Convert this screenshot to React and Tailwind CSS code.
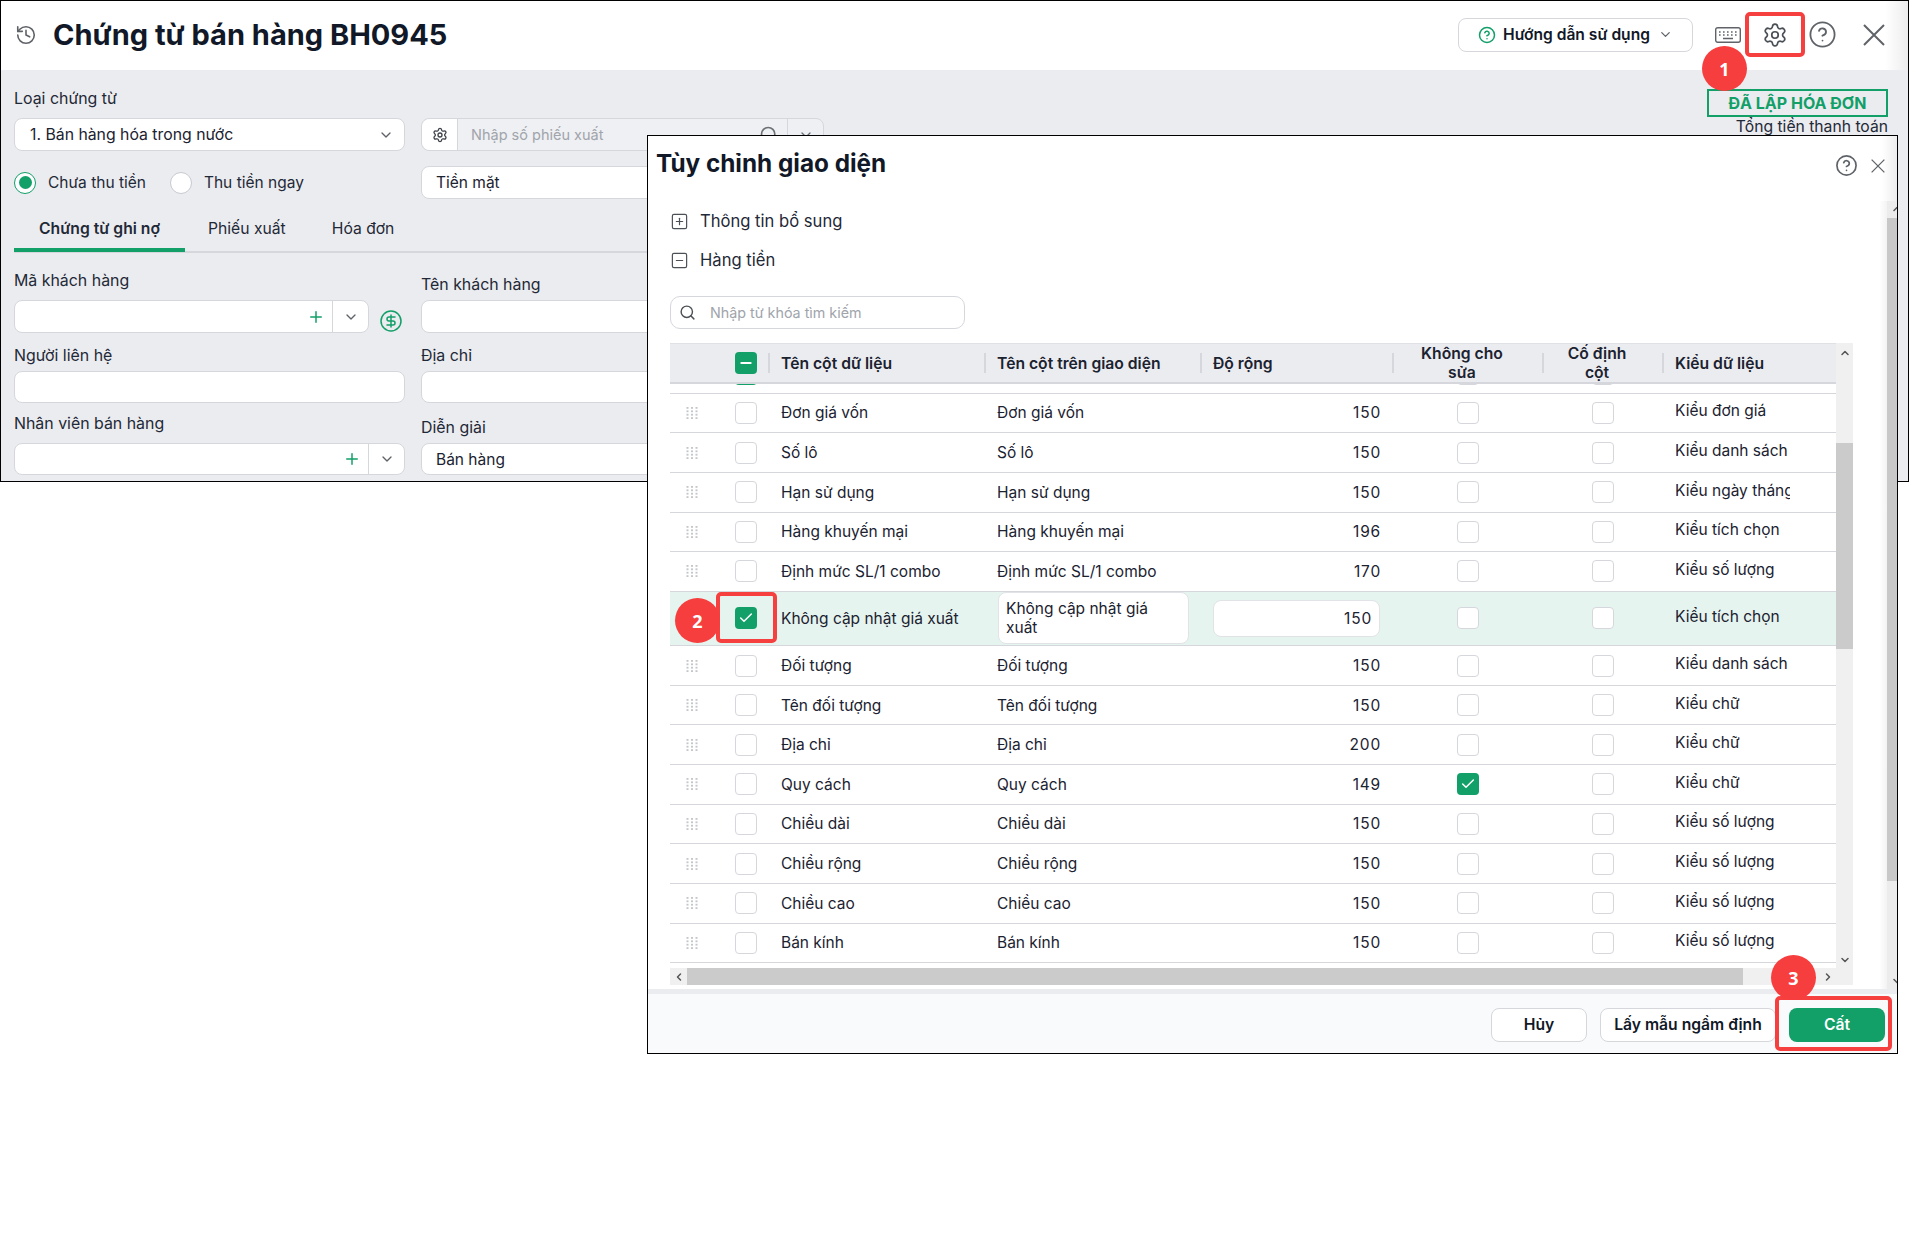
import {
  Check,
  ChevronDown,
  ChevronLeft,
  ChevronRight,
  ChevronUp,
  CircleDollarSign,
  CircleHelp,
  History,
  Minus,
  Plus,
  Search,
  Settings,
  SquareMinus,
  SquarePlus,
} from "lucide-react";

const rowsTop = [
  ["Đơn giá vốn", 150, "Kiểu đơn giá"],
  ["Số lô", 150, "Kiểu danh sách"],
  ["Hạn sử dụng", 150, "Kiểu ngày tháng"],
  ["Hàng khuyến mại", 196, "Kiểu tích chọn"],
  ["Định mức SL/1 combo", 170, "Kiểu số lượng"],
];

const rowsBottom = [
  ["Đối tượng", 150, "Kiểu danh sách"],
  ["Tên đối tượng", 150, "Kiểu chữ"],
  ["Địa chỉ", 200, "Kiểu chữ"],
  ["Quy cách", 149, "Kiểu chữ", true],
  ["Chiều dài", 150, "Kiểu số lượng"],
  ["Chiều rộng", 150, "Kiểu số lượng"],
  ["Chiều cao", 150, "Kiểu số lượng"],
  ["Bán kính", 150, "Kiểu số lượng"],
];

const gridCols =
  "grid grid-cols-[65px_33px_216px_216px_192px_150px_120px_174px] items-center";

const Box = ({ checked }) =>
  checked ? (
    <span className="flex size-[22px] items-center justify-center rounded-[4px] bg-[#129f68] text-white">
      <Check size={16} strokeWidth={2.25} />
    </span>
  ) : (
    <span className="block size-[22px] rounded-[4px] border border-[#d5d7dc] bg-white" />
  );

const DragDots = () => (
  <svg width="12" height="12" viewBox="0 0 12 12" fill="#c4c6ca" className="ml-4">
    {[0, 1, 2, 3].map((r) =>
      [0, 1, 2].map((c) => (
        <rect key={`${r}-${c}`} x={c * 4.5 + 0.5} y={r * 3.4} width="2" height="1.8" />
      )),
    )}
  </svg>
);

const CloseIcon = ({ size }) => (
  <svg width={size} height={size} viewBox="0 0 22 22" fill="none" stroke="currentColor" strokeWidth="2">
    <path d="M1 1L21 21M21 1L1 21" />
  </svg>
);

const Row = ({ name, width, type, locked }) => (
  <div className={`${gridCols} h-[39.65px] border-b border-[#d5d7dc] text-[15.5px] text-[#1b2230]`}>
    <DragDots />
    <Box />
    <div className="pl-[13px]">{name}</div>
    <div className="pl-[13px]">{name}</div>
    <div className="pr-[11px] text-right tracking-[0.8px]">{width}</div>
    <div className="pl-[65px]">
      <Box checked={locked} />
    </div>
    <div className="pl-[50px]">
      <Box />
    </div>
    <div className="-mt-1 w-[128px] overflow-hidden whitespace-nowrap pl-[13px]">{type}</div>
  </div>
);

const HeadCell = ({ children, center, textClass = "" }) => (
  <div className="flex h-full items-center">
    <span className="h-5 w-0.5 shrink-0 bg-[#d5d7dc]" />
    <div className={`${center ? "text-center" : "pl-[11px]"} ${textClass}`}>{children}</div>
  </div>
);

const Field = ({ label, mb, children }) => (
  <div>
    <div className={`h-5 text-[15.9px] leading-5 text-[#1f2937] ${mb}`}>{label}</div>
    {children}
  </div>
);

const Input = ({ h, children, className = "" }) => (
  <div className={`flex items-center rounded-lg border border-[#d5d7dc] bg-white text-[15.5px] text-[#1b2230] ${h} ${className}`}>
    {children}
  </div>
);

const Badge = ({ n, className }) => (
  <div
    className={`absolute flex size-[45px] items-center justify-center rounded-full bg-[#f63e3e] font-['Open_Sans',sans-serif] text-lg font-bold text-white ${className}`}
  >
    {n}
  </div>
);

const RedBox = ({ className }) => (
  <div className={`absolute rounded-[5px] border-4 border-[#f64040] ${className}`} />
);

const KeyboardIcon = () => (
  <svg width="26" height="16" viewBox="0 0 26 16" fill="none" stroke="#5f6368" strokeWidth="1.4">
    <rect x="0.7" y="0.7" width="24.6" height="14.6" rx="2" />
    <path d="M4 5h1.6M8 5h1.6M12 5h1.6M16 5h1.6M20 5h1.6M4 8h1.6M8 8h1.6M12 8h1.6M16 8h1.6M20 8h1.6M8 11.5h10" />
  </svg>
);

const App = () => {
  return (
    <div className="relative h-[1256px] w-full overflow-hidden bg-white font-['Inter',sans-serif] text-[#111827]">
      {/* cua so chung tu */}
      <div className="h-[482px] w-[1909px] overflow-hidden border border-black">
        <div className="flex h-[69px] items-center bg-gradient-to-r from-white from-[98.8%] to-[#ededed] pb-[2px] pl-[14px] pr-[23px]">
          <History size={22} strokeWidth={1.75} className="text-[#5f6368]" />
          <h1 className="ml-[16px] text-[29px] font-bold text-[#111827]">Chứng từ bán hàng BH0945</h1>
          <div className="ml-auto flex h-[34px] w-[235px] items-center justify-center rounded-lg border border-[#d5d7dc] text-[15.6px] font-semibold">
            <CircleHelp size={18} className="mr-[7px] text-[#129f68]" />
            Hướng dẫn sử dụng
            <ChevronDown size={15} className="ml-2 text-[#5f6368]" />
          </div>
          <div className="ml-[22px]">
            <KeyboardIcon />
          </div>
          <Settings size={26} strokeWidth={1.6} className="ml-[21px] text-[#4b5056]" />
          <CircleHelp size={29} strokeWidth={1.5} className="ml-[20px] text-[#5f6368]" />
          <div className="ml-[26px] text-[#5f6368]">
            <CloseIcon size={22} />
          </div>
        </div>

        <div className="flex h-[411px] bg-[#ebecef] pl-[13px]">
          <div className="w-[1200px] shrink-0 pt-[19px]">
            <div className="h-5 text-[15.9px] leading-5 text-[#1f2937]">Loại chứng từ</div>
            <div className="mt-[9px] flex gap-4">
              <Input h="h-[33px]" className="w-[391px] justify-between pl-[15px] pr-[10px] text-[15.8px]">
                1. Bán hàng hóa trong nước
                <ChevronDown size={16} className="text-[#5f6368]" />
              </Input>
              <div className="flex h-[33px] w-[403px] items-center rounded-lg border border-[#d5d7dc] bg-[#eff0f3] text-[14.5px] text-[#a0a4ab]">
                <div className="flex h-full w-9 items-center justify-center rounded-l-lg border-r border-[#d5d7dc] bg-white">
                  <Settings size={16} className="text-[#3f444a]" />
                </div>
                <span className="ml-[13px]">Nhập số phiếu xuất</span>
                <Search size={20} className="ml-auto mr-2 text-[#6b7075]" />
                <div className="flex h-full w-9 items-center justify-center border-l border-[#d5d7dc]">
                  <ChevronDown size={16} className="text-[#6b7075]" />
                </div>
              </div>
            </div>
            <div className="mt-[15px] flex gap-4">
              <div className="flex h-[33px] w-[391px] items-center text-[15.5px] text-[#1f2937]">
                <span className="flex size-[22px] items-center justify-center rounded-full border border-[#129f68] bg-white">
                  <span className="size-[13px] rounded-full bg-[#129f68]" />
                </span>
                <span className="ml-3">Chưa thu tiền</span>
                <span className="ml-6 size-[22px] rounded-full border border-[#c7cad0] bg-white" />
                <span className="ml-3">Thu tiền ngay</span>
              </div>
              <Input h="h-[33px]" className="w-[403px] bg-[#f3f4f6] pl-[14px]">
                Tiền mặt
              </Input>
            </div>

            <div className="mt-[9px] flex h-[45px] border-b-2 border-[#d5d7dc] text-[15.7px] text-[#1f2937]">
              <div className="h-[44px] w-[171px] border-b-4 border-[#129f68] pt-[9px] text-center font-semibold">
                Chứng từ ghi nợ
              </div>
              <div className="px-[23px] pt-[9px]">Phiếu xuất</div>
              <div className="px-[23px] pt-[9px]">Hóa đơn</div>
            </div>

            <div className="grid grid-cols-[391px_403px] grid-rows-[80px_70px_72px] items-end gap-x-4">
              <Field label="Mã khách hàng" mb="mb-[9px]">
                <div className="flex items-center">
                  <Input h="h-[33px]" className="w-[355px] pr-0">
                    <Plus size={18} className="ml-auto mr-[7px] text-[#129f68]" />
                    <div className="flex h-full w-9 items-center justify-center border-l border-[#d5d7dc]">
                      <ChevronDown size={16} className="text-[#5f6368]" />
                    </div>
                  </Input>
                  <CircleDollarSign size={24} strokeWidth={1.5} className="ml-[10px] mt-2 text-[#129f68]" />
                </div>
              </Field>
              <Field label="Tên khách hàng" mb="mb-[5px]">
                <Input h="h-[33px]" />
              </Field>
              <Field label="Người liên hệ" mb="mb-[5px]">
                <Input h="h-[32px]" />
              </Field>
              <Field label="Địa chỉ" mb="mb-[5px]">
                <Input h="h-[32px]" />
              </Field>
              <Field label="Nhân viên bán hàng" mb="mb-[9px]">
                <Input h="h-[32px]">
                  <Plus size={18} className="ml-auto mr-[7px] text-[#129f68]" />
                  <div className="flex h-full w-9 items-center justify-center border-l border-[#d5d7dc]">
                    <ChevronDown size={16} className="text-[#5f6368]" />
                  </div>
                </Input>
              </Field>
              <Field label="Diễn giải" mb="mb-[5px]">
                <Input h="h-[32px]" className="pl-[14px] pt-[2px]">
                  Bán hàng
                </Input>
              </Field>
            </div>
          </div>

          <div className="ml-auto flex flex-col items-end pr-[20px] pt-[19px]">
            <div className="flex h-7 w-[181px] items-center justify-center border-2 border-[#129f68] text-base font-bold text-[#129f68]">
              ĐÃ LẬP HÓA ĐƠN
            </div>
            <div className="text-[15.7px] leading-5 text-[#1f2937]">Tổng tiền thanh toán</div>
          </div>
        </div>
      </div>

      {/* hop thoai tuy chinh */}
      <div className="absolute left-[647px] top-[135px] flex h-[919px] w-[1251px] flex-col border border-black bg-white">
        <div className="flex h-[65px] shrink-0 items-start justify-between bg-gradient-to-r from-white from-[98.8%] to-[#ededed] pl-2 pr-[12px]">
          <h2 className="mt-[9px] text-[24.3px] font-bold text-[#111827]">Tùy chỉnh giao diện</h2>
          <div className="mt-[18px] flex items-center gap-[13px] text-[#5f6368]">
            <CircleHelp size={23} strokeWidth={1.75} />
            <CloseIcon size={14} />
          </div>
        </div>

        <div className="flex h-[788px] shrink-0">
          <div className="flex-1 pl-[22px]">
            <div className="mt-1 flex h-8 items-center gap-[11px] text-[16.6px] text-[#1f2937]">
              <SquarePlus size={19} strokeWidth={1.5} className="text-[#4b5056]" />
              Thông tin bổ sung
            </div>
            <div className="mt-[7px] flex h-8 items-center gap-[11px] text-[16.6px] text-[#1f2937]">
              <SquareMinus size={19} strokeWidth={1.5} className="text-[#4b5056]" />
              Hàng tiền
            </div>
            <div className="mt-5 flex h-[33px] w-[295px] items-center rounded-[10px] border border-[#d5d7dc] pl-2 text-[14.3px] text-[#a0a4ab]">
              <Search size={17} className="text-[#4b5056]" />
              <span className="ml-[14px]">Nhập từ khóa tìm kiếm</span>
            </div>

            <div className="mt-[14px] w-[1183px]">
              <div className="flex h-[625px]">
                <div className="w-[1166px]">
                  <div className={`${gridCols} h-[41px] border-b-2 border-[#d5d7dc] border-t border-t-[#dfe1e5] bg-[#ebecef] text-[15.7px] font-semibold leading-[19px] text-[#1b2230]`}>
                    <div />
                    <div className="flex size-[22px] items-center justify-center rounded-[4px] bg-[#129f68] text-white">
                      <Minus size={16} strokeWidth={3} />
                    </div>
                    <HeadCell>Tên cột dữ liệu</HeadCell>
                    <HeadCell>Tên cột trên giao diện</HeadCell>
                    <HeadCell>Độ rộng</HeadCell>
                    <HeadCell center textClass="w-[136px] px-[22px]">Không cho sửa</HeadCell>
                    <HeadCell center textClass="w-[106px] px-[13px]">Cố định cột</HeadCell>
                    <HeadCell>Kiểu dữ liệu</HeadCell>
                  </div>

                  <div className="h-[9.6px] overflow-hidden border-b border-[#d5d7dc]">
                    <div className={`${gridCols} -mt-[21px]`}>
                      <div />
                      <Box checked />
                      <div />
                      <div />
                      <div />
                      <div className="pl-[65px]">
                        <Box />
                      </div>
                      <div className="pl-[50px]">
                        <Box />
                      </div>
                    </div>
                  </div>

                  {rowsTop.map((r) => (
                    <Row key={r[0]} name={r[0]} width={r[1]} type={r[2]} />
                  ))}

                  <div className={`${gridCols} h-[54.4px] border-b border-[#d5d7dc] bg-[#e6f4ef] text-[15.5px] text-[#1b2230]`}>
                    <DragDots />
                    <Box checked />
                    <div className="whitespace-nowrap pl-[13px]">Không cập nhật giá xuất</div>
                    <div className="pl-[14px]">
                      <div className="flex h-[52px] w-[191px] items-center rounded-lg border border-[#e1e3e7] bg-white pl-[7px] pr-6 leading-[19px]">
                        Không cập nhật giá xuất
                      </div>
                    </div>
                    <div className="pl-[13px] pr-3">
                      <div className="flex h-[37px] items-center justify-end rounded-lg border border-[#e1e3e7] bg-white pr-[7px] tracking-[0.8px]">
                        150
                      </div>
                    </div>
                    <div className="pl-[65px]">
                      <Box />
                    </div>
                    <div className="pl-[50px]">
                      <Box />
                    </div>
                    <div className="-mt-1 whitespace-nowrap pl-[13px]">Kiểu tích chọn</div>
                  </div>

                  {rowsBottom.map((r) => (
                    <Row key={r[0]} name={r[0]} width={r[1]} type={r[2]} locked={r[3]} />
                  ))}
                </div>

                <div className="flex w-[17px] flex-col items-center bg-[#f0f0f0] text-[#555]">
                  <ChevronUp size={12} strokeWidth={3} className="mt-1" />
                  <div className="mt-[84px] h-[206px] w-full bg-[#cbcbcb]" />
                  <ChevronDown size={12} strokeWidth={3} className="mb-[2px] mt-auto" />
                </div>
              </div>

              <div className="flex h-[17px] items-center bg-[#f0f0f0] text-[#555]">
                <div className="flex w-[17px] justify-center">
                  <ChevronLeft size={12} strokeWidth={3} />
                </div>
                <div className="h-full w-[1056px] bg-[#cbcbcb]" />
                <ChevronRight size={12} strokeWidth={3} className="ml-[79px]" />
              </div>
            </div>
          </div>

          <div className="w-2 shrink-0 bg-gradient-to-r from-white to-[#f3f3f3]" />
          <div className="w-[10px] shrink-0 overflow-hidden bg-[#ececec] text-[#555]">
            <ChevronUp size={12} strokeWidth={3} className="ml-1 mt-[2px]" />
            <div className="mt-[3px] h-[663px] w-full bg-[#c8c8c8]" />
            <ChevronDown size={12} strokeWidth={3} className="ml-1 mt-[94px]" />
          </div>
        </div>

        <div className="flex flex-1 items-start justify-end gap-[13px] border-t-[5px] border-[#ebecef] bg-[#f9fafb] pr-[12px] pt-[14px] text-[15.7px] font-semibold text-[#111827]">
          <div className="flex h-[34px] w-[96px] items-center justify-center rounded-lg border border-[#d5d7dc] bg-white">Hủy</div>
          <div className="flex h-[34px] w-[176px] items-center justify-center rounded-lg border border-[#d5d7dc] bg-white">Lấy mẫu ngầm định</div>
          <div className="flex h-[34px] w-[96px] items-center justify-center rounded-lg bg-[#129f68] text-white">Cất</div>
        </div>
      </div>

      {/* chu thich */}
      <RedBox className="left-[1745px] top-[12px] h-[45px] w-[60px]" />
      <Badge n="1" className="left-[1702px] top-[46px]" />
      <RedBox className="left-[716px] top-[592px] h-[51px] w-[61px]" />
      <Badge n="2" className="left-[675px] top-[598px]" />
      <RedBox className="left-[1775px] top-[996px] h-[55px] w-[117px]" />
      <Badge n="3" className="left-[1771px] top-[955px]" />
    </div>
  );
};

export default App;
